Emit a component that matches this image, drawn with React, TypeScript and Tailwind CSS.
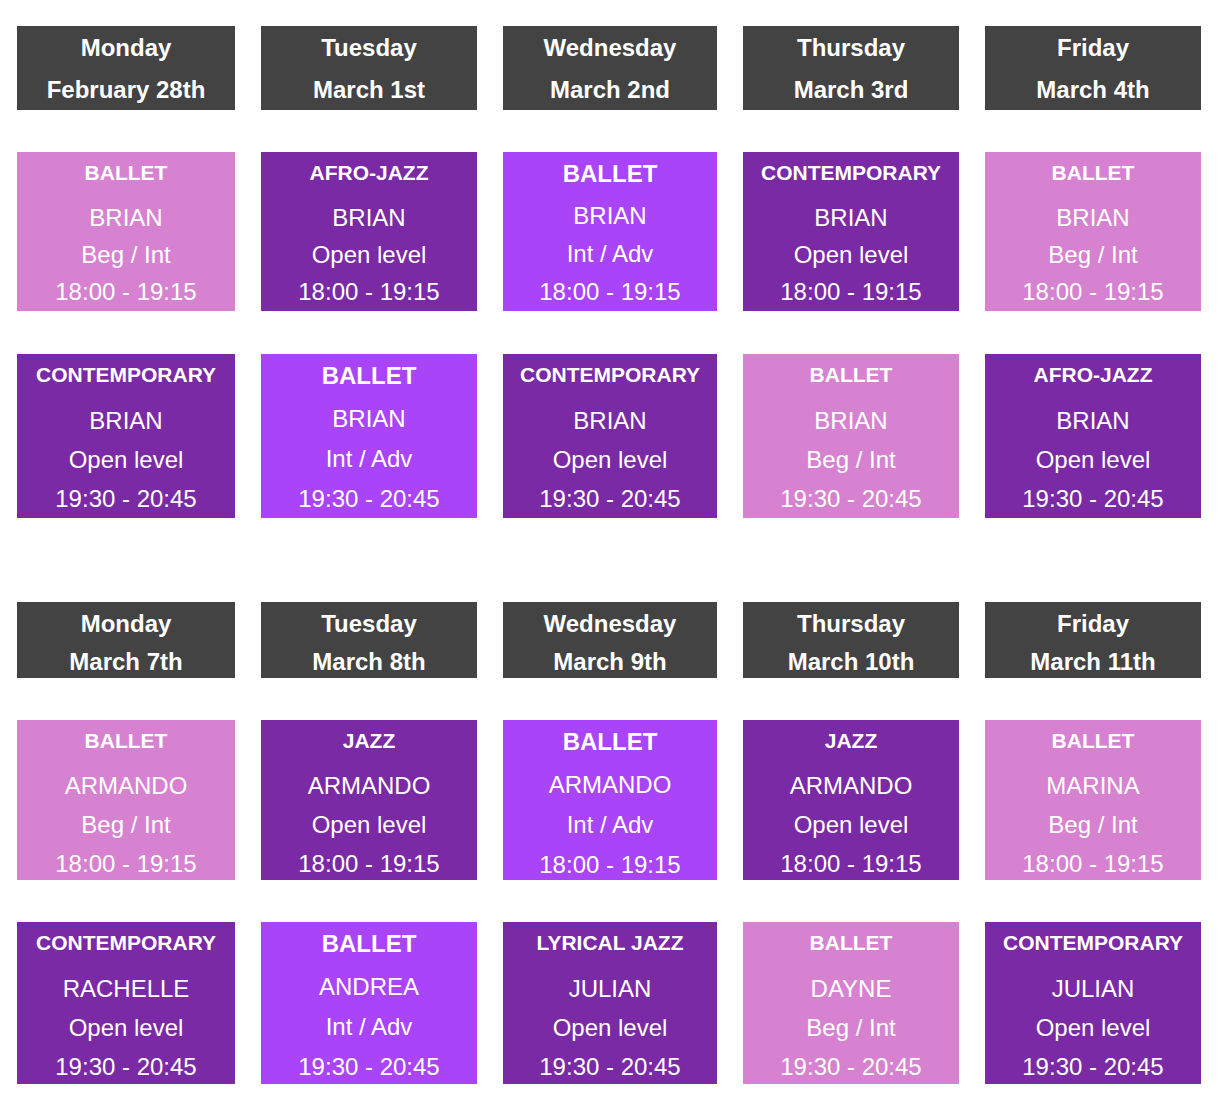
import React from "react";

type Kind = "pink" | "dark" | "bright";
type Cls = { kind: Kind; title: string; name: string; level: string };

const bg: Record<Kind, string> = {
  pink: "bg-[#d682d1]",
  dark: "bg-[#7a2aa5]",
  bright: "bg-[#a944f8]",
};

const cols = "grid grid-cols-[218px_216px_214px_216px_216px] gap-x-[26px]";

type RowCfg = {
  h: string;
  titleH: string;
  line: string;
  brightLine: string;
};

function Header({ day, date, h, line, pt }: { day: string; date: string; h: string; line: string; pt: string }) {
  return (
    <div className={`bg-[#434343] text-white font-bold text-[24px] text-center ${h} ${pt}`}>
      <div className={line}>{day}</div>
      <div className={line}>{date}</div>
    </div>
  );
}

function Card({ c, time, cfg }: { c: Cls; time: string; cfg: RowCfg }) {
  const bright = c.kind === "bright";
  const line = bright ? cfg.brightLine : cfg.line;
  return (
    <div className={`${bg[c.kind]} ${cfg.h} text-white text-center overflow-hidden`}>
      {bright ? (
        <div className="h-[45px] pt-[3px]">
          <div className="font-bold text-[24px] leading-[37px]">{c.title}</div>
        </div>
      ) : (
        <div className={`${cfg.titleH} pt-[2px]`}>
          <div className="font-bold text-[21px] leading-[37px]">{c.title}</div>
        </div>
      )}
      <div className={`text-[24px] ${line}`}>{c.name}</div>
      <div className={`text-[24px] ${line}`}>{c.level}</div>
      <div className={`text-[24px] ${line}`}>{time}</div>
    </div>
  );
}

const P = (title: string, name: string): Cls => ({ kind: "pink", title, name, level: "Beg / Int" });
const D = (title: string, name: string): Cls => ({ kind: "dark", title, name, level: "Open level" });
const B = (title: string, name: string): Cls => ({ kind: "bright", title, name, level: "Int / Adv" });

const week1Headers = [
  ["Monday", "February 28th"],
  ["Tuesday", "March 1st"],
  ["Wednesday", "March 2nd"],
  ["Thursday", "March 3rd"],
  ["Friday", "March 4th"],
];
const week2Headers = [
  ["Monday", "March 7th"],
  ["Tuesday", "March 8th"],
  ["Wednesday", "March 9th"],
  ["Thursday", "March 10th"],
  ["Friday", "March 11th"],
];

const w1r1 = [P("BALLET", "BRIAN"), D("AFRO-JAZZ", "BRIAN"), B("BALLET", "BRIAN"), D("CONTEMPORARY", "BRIAN"), P("BALLET", "BRIAN")];
const w1r2 = [D("CONTEMPORARY", "BRIAN"), B("BALLET", "BRIAN"), D("CONTEMPORARY", "BRIAN"), P("BALLET", "BRIAN"), D("AFRO-JAZZ", "BRIAN")];
const w2r1 = [P("BALLET", "ARMANDO"), D("JAZZ", "ARMANDO"), B("BALLET", "ARMANDO"), D("JAZZ", "ARMANDO"), P("BALLET", "MARINA")];
const w2r2 = [D("CONTEMPORARY", "RACHELLE"), B("BALLET", "ANDREA"), D("LYRICAL JAZZ", "JULIAN"), P("BALLET", "DAYNE"), D("CONTEMPORARY", "JULIAN")];

const cfgA: RowCfg = { h: "h-[159px]", titleH: "h-[47px]", line: "leading-[37px]", brightLine: "leading-[38px]" };
const cfgB: RowCfg = { h: "h-[164px]", titleH: "h-[47px]", line: "leading-[39px]", brightLine: "leading-[40px]" };
const cfgC: RowCfg = { h: "h-[160px]", titleH: "h-[46px]", line: "leading-[39px]", brightLine: "leading-[40px]" };
const cfgD: RowCfg = { h: "h-[162px]", titleH: "h-[47px]", line: "leading-[39px]", brightLine: "leading-[40px]" };

export default function App() {
  return (
    <div
      className="w-[1221px] min-h-[1105px] bg-white pt-[26px] pl-[17px]"
      style={{ fontFamily: '"Liberation Sans", Arial, Helvetica, sans-serif' }}
    >
      <div className={cols}>
        {week1Headers.map(([d, t]) => (
          <Header key={t} day={d} date={t} h="h-[84px]" line="leading-[42px]" pt="pt-[1px]" />
        ))}
      </div>
      <div className={`${cols} mt-[42px]`}>
        {w1r1.map((c, i) => (
          <Card key={i} c={c} time="18:00 - 19:15" cfg={cfgA} />
        ))}
      </div>
      <div className={`${cols} mt-[43px]`}>
        {w1r2.map((c, i) => (
          <Card key={i} c={c} time="19:30 - 20:45" cfg={cfgB} />
        ))}
      </div>
      <div className={`${cols} mt-[84px]`}>
        {week2Headers.map(([d, t]) => (
          <Header key={t} day={d} date={t} h="h-[76px]" line="leading-[37.5px]" pt="pt-[3px]" />
        ))}
      </div>
      <div className={`${cols} mt-[42px]`}>
        {w2r1.map((c, i) => (
          <Card key={i} c={c} time="18:00 - 19:15" cfg={cfgC} />
        ))}
      </div>
      <div className={`${cols} mt-[42px]`}>
        {w2r2.map((c, i) => (
          <Card key={i} c={c} time="19:30 - 20:45" cfg={cfgD} />
        ))}
      </div>
    </div>
  );
}
